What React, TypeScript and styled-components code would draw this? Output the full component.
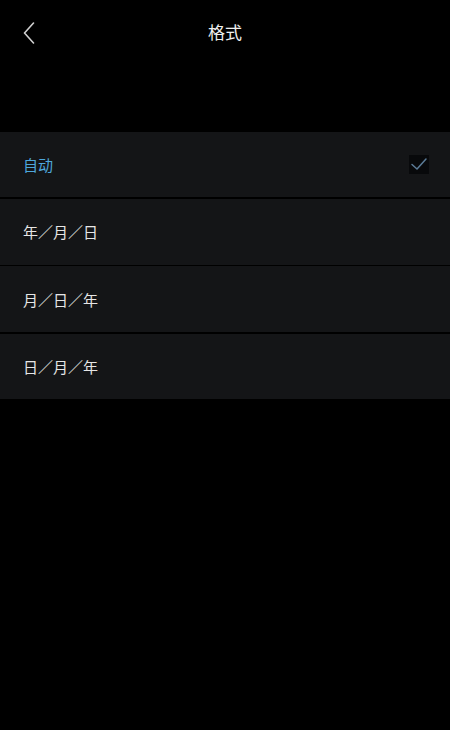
import React from "react";
import styled, { createGlobalStyle } from "styled-components";

const Global = createGlobalStyle`
  html, body { margin: 0; padding: 0; background: #000; }
  body { font-family: "Noto Sans CJK SC", "Noto Sans", sans-serif; }
`;

const Page = styled.div`
  width: 450px;
  min-height: 730px;
  background: #000;
  display: flex;
  flex-direction: column;
`;

const Header = styled.header`
  position: relative;
  height: 66px;
  display: flex;
  align-items: center;
  justify-content: center;
  padding-bottom: 3px;
  box-sizing: border-box;
`;

const BackButton = styled.button`
  position: absolute;
  left: 18px;
  top: 18px;
  width: 22px;
  height: 30px;
  padding: 0;
  border: none;
  background: transparent;
  display: flex;
  align-items: center;
  justify-content: center;
`;

const Title = styled.h1`
  margin: 0;
  font-size: 17px;
  font-weight: 400;
  color: #f0f0f0;
  line-height: 1;
`;

const List = styled.ul`
  list-style: none;
  margin: 65.5px 0 0;
  padding: 0;
  display: flex;
  flex-direction: column;
  gap: 1.7px;
`;

const Row = styled.li`
  height: 65.7px;
  background: #141517;
  display: flex;
  align-items: center;
  justify-content: space-between;
  padding: 0 21px 0 23px;
  box-sizing: border-box;
`;

const Label = styled.span<{ $active?: boolean }>`
  font-size: 15px;
  font-weight: 400;
  color: ${(p) => (p.$active ? "#4ea7dc" : "#e6e6e6")};
  letter-spacing: 0;
`;

const CheckBox = styled.span`
  width: 20px;
  height: 19px;
  background: #08090b;
  display: flex;
  align-items: center;
  justify-content: center;
`;

const items = [
  { label: "自动", active: true },
  { label: "年／月／日" },
  { label: "月／日／年" },
  { label: "日／月／年" },
];

export default function App() {
  return (
    <Page>
      <Global />
      <Header>
        <BackButton aria-label="back">
          <svg width="12" height="22" viewBox="0 0 12 22">
            <path d="M10.5 1 L1.5 11 L10.5 21" fill="none" stroke="#d0d0d0" strokeWidth="1.6" strokeLinecap="round" strokeLinejoin="round" />
          </svg>
        </BackButton>
        <Title>格式</Title>
      </Header>
      <List>
        {items.map((it) => (
          <Row key={it.label}>
            <Label $active={it.active}>{it.label}</Label>
            {it.active && (
              <CheckBox>
                <svg width="18" height="14" viewBox="0 0 18 14">
                  <path d="M2 7.5 L7 12 L16 2" fill="none" stroke="#5b7b97" strokeWidth="1.5" strokeLinecap="round" strokeLinejoin="round" />
                </svg>
              </CheckBox>
            )}
          </Row>
        ))}
      </List>
    </Page>
  );
}
